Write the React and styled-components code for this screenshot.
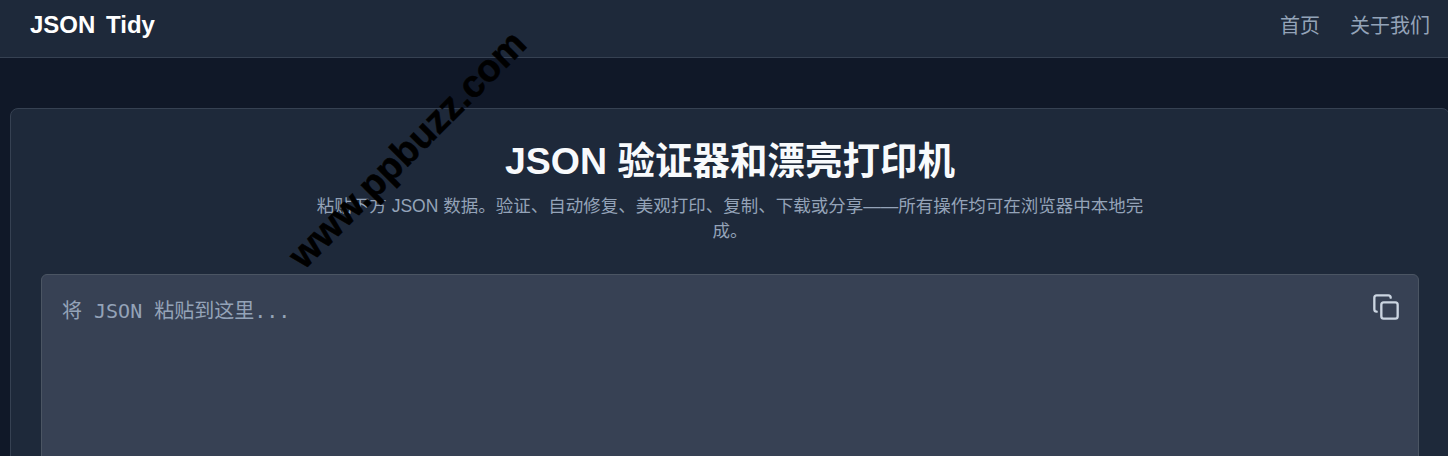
import React from 'react'
import styled, { createGlobalStyle } from 'styled-components'

const GlobalStyle = createGlobalStyle`
  html, body {
    margin: 0;
    height: 456px;
    overflow: hidden;
    background: #101828;
  }
  body {
    font-family: "Liberation Sans", "Noto Sans CJK SC", sans-serif;
  }
`

const Page = styled.div`
  position: relative;
  width: 1448px;
  height: 456px;
  overflow: hidden;
`

const Navbar = styled.header`
  height: 49px;
  box-sizing: content-box;
  display: flex;
  align-items: center;
  justify-content: space-between;
  padding: 0 18px 8px 30px;
  background: #1e293a;
  border-bottom: 1px solid #364152;
`

const Brand = styled.div`
  color: #fff;
  font-size: 24px;
  font-weight: 700;
  word-spacing: 4px;
`

const NavLinks = styled.nav`
  display: flex;
  gap: 30px;
`

const NavLink = styled.a`
  color: #94a3b8;
  font-size: 20px;
`

const Main = styled.main`
  width: 1440px;
  padding: 50px 0 0 10px;
`

const Card = styled.section`
  box-sizing: border-box;
  height: 400px;
  padding: 30px;
  background: #1e293a;
  border: 1px solid #364152;
  border-radius: 8px;
`

const Title = styled.h1`
  margin: 0;
  color: #f8fafc;
  font-size: 37.5px;
  line-height: 44px;
  font-weight: 700;
  text-align: center;
`

const Subtitle = styled.p`
  width: 840px;
  margin: 11px auto 30px;
  color: #94a3b8;
  font-size: 17.5px;
  line-height: 25px;
  text-align: center;
`

const Editor = styled.div`
  position: relative;
  height: 300px;
  background: #374154;
  border: 1px solid #4b5563;
  border-radius: 6px;
`

const Input = styled.textarea`
  display: block;
  box-sizing: border-box;
  width: 100%;
  height: 100%;
  padding: 21px 20px;
  border: 0;
  outline: 0;
  resize: none;
  background: transparent;
  color: #cbd5e1;
  font-family: "DejaVu Sans Mono", "Noto Sans CJK SC", monospace;
  font-size: 20px;
  line-height: 30px;

  &::placeholder {
    color: #94a3b8;
    opacity: 1;
  }
`

const CopyButton = styled.button`
  position: absolute;
  top: 18px;
  right: 18px;
  display: flex;
  padding: 0;
  border: 0;
  background: none;
  color: #cbd5e1;
`

const Watermark = styled.div`
  position: absolute;
  left: 407px;
  top: 149px;
  color: #000;
  font-size: 38px;
  font-weight: 700;
  line-height: 1;
  white-space: nowrap;
  -webkit-text-stroke: 0.6px #000;
  transform: translate(-50%, -50%) rotate(-45deg);
  pointer-events: none;
`

function CopyIcon() {
  return (
    <svg width="28" height="28" viewBox="0 0 24 24" fill="none" stroke="currentColor" strokeWidth="2" strokeLinecap="round" strokeLinejoin="round">
      <rect x="8" y="8" width="14" height="14" rx="2" />
      <path d="M4 16c-1.1 0-2-.9-2-2V4c0-1.1.9-2 2-2h10c1.1 0 2 .9 2 2" />
    </svg>
  )
}

export default function App() {
  return (
    <Page>
      <GlobalStyle />
      <Navbar>
        <Brand>JSON Tidy</Brand>
        <NavLinks>
          <NavLink>首页</NavLink>
          <NavLink>关于我们</NavLink>
        </NavLinks>
      </Navbar>
      <Main>
        <Card>
          <Title>JSON 验证器和漂亮打印机</Title>
          <Subtitle>粘贴下方 JSON 数据。验证、自动修复、美观打印、复制、下载或分享——所有操作均可在浏览器中本地完成。</Subtitle>
          <Editor>
            <Input placeholder="将 JSON 粘贴到这里..." />
            <CopyButton><CopyIcon /></CopyButton>
          </Editor>
        </Card>
      </Main>
      <Watermark>www.ppbuzz.com</Watermark>
    </Page>
  )
}
